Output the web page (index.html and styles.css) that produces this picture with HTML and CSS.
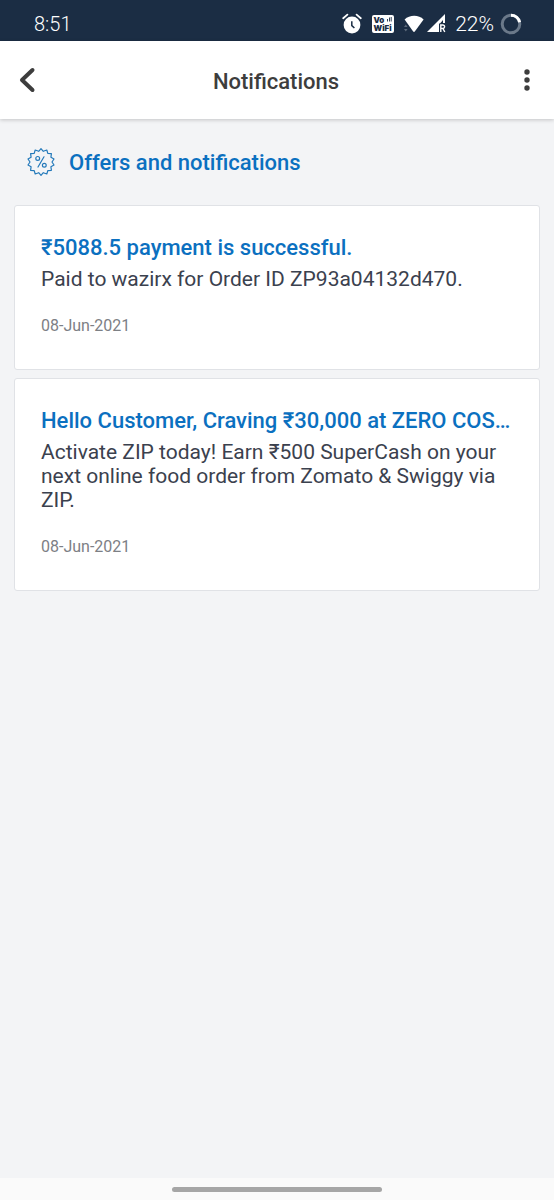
FILE: index.html
```
<!DOCTYPE html>
<html lang="en">
<head>
<meta charset="utf-8">
<meta name="viewport" content="width=device-width, initial-scale=1">
<title>Notifications</title>
<link rel="stylesheet" href="styles.css">
</head>
<body>
<div class="status-bar">
  <span class="clock">8:51</span>
  <div class="status-icons">
    <svg class="alarm" width="20" height="22" viewBox="0 0 20 22" aria-hidden="true">
      <circle cx="10" cy="12" r="8.4" fill="#fff"/>
      <path d="M1.2 5.2 5.4 1.6M18.8 5.2 14.6 1.6" stroke="#fff" stroke-width="1.8" stroke-linecap="round"/>
      <path d="M9.8 8.2v4.4l2.6 2.4" stroke="#1b2d44" stroke-width="1.5" fill="none"/>
    </svg>
    <svg class="vowifi" width="22" height="20" viewBox="0 0 22 20" role="img" aria-label="VoWiFi">
      <rect width="22" height="18" y="1" rx="2" fill="#fff"/>
      <text class="badge-text" x="1.5" y="9">Vo</text>
      <text class="badge-text" x="1.5" y="17">WiFi</text>
      <path d="M15.5 7.5V5M17.5 7.5V3.5M19.2 7.5V3" stroke="#1b2d44" stroke-width="0.9"/>
    </svg>
    <svg class="wifi" width="20" height="18" viewBox="0 0 20 18" aria-hidden="true">
      <path d="M0.6 4.4C5.6-0.6 14.8-0.6 19.6 4.4L10.8 16.6q-.8.9-1.6 0Z" fill="#fff"/>
      <path d="M0 12 1.8 9.6 3.6 12ZM0 14 1.8 16.4 3.6 14Z" fill="#5c6a7b"/>
    </svg>
    <svg class="signal" width="19" height="19" viewBox="0 0 19 19" aria-hidden="true">
      <path d="M0 18 18 0V9H16V6L13 9.5H12V18Z" fill="#fff"/>
      <path d="M13.8 18v-7h2.1a1.7 1.7 0 0 1 0 3.4h-2.1M15.8 14.4 17.8 18" stroke="#fff" stroke-width="1.4" fill="none"/>
    </svg>
    <span class="battery-level">22%</span>
    <svg class="battery" width="22" height="22" viewBox="0 0 22 22" aria-hidden="true">
      <circle cx="11" cy="11" r="8.8" stroke="#6b798a" stroke-width="3" fill="none"/>
      <path d="M11 2.2a8.8 8.8 0 0 1 8.6 7" stroke="#fff" stroke-width="3" fill="none"/>
    </svg>
  </div>
</div>

<header class="app-bar">
  <button class="icon-button" type="button" aria-label="Back">
    <svg width="18" height="26" viewBox="0 0 18 26"><path d="M14.5 3 4 13 14.5 23" fill="none" stroke="#3d3d3d" stroke-width="4" stroke-linecap="round" stroke-linejoin="round"/></svg>
  </button>
  <h1 class="app-title">Notifications</h1>
  <button class="icon-button menu-button" type="button" aria-label="More options">
    <svg width="6" height="24" viewBox="0 0 6 24" fill="#3d3d3d"><circle cx="3" cy="4" r="2.7"/><circle cx="3" cy="12" r="2.7"/><circle cx="3" cy="20" r="2.7"/></svg>
  </button>
</header>

<main class="content">
  <div class="section-heading">
    <svg width="28" height="28" viewBox="0 0 28 28" fill="none" stroke="#2379ba" stroke-width="1.2" stroke-linejoin="round" aria-hidden="true">
      <path d="M14 .7 16.3 3.3 19.8 2 20.8 5.4 24.4 5.7 23.9 9.3 27 11 25 14 27 17 23.9 18.7 24.4 22.3 20.8 22.6 19.8 26 16.3 24.7 14 27.3 11.7 24.7 8.2 26 7.2 22.6 3.6 22.3 4.1 18.7 1 17 3 14 1 11 4.1 9.3 3.6 5.7 7.2 5.4 8.2 2 11.7 3.3Z"/>
      <circle cx="10.7" cy="10.4" r="1.9"/><circle cx="17.3" cy="17.3" r="1.9"/>
      <path d="M17 8.8 11 19" stroke-linecap="round"/>
    </svg>
    <h2 class="section-title">Offers and notifications</h2>
  </div>
  <div class="card-list">
    <article class="card">
      <h3 class="card-title">₹5088.5 payment is successful.</h3>
      <p class="card-text">Paid to wazirx for Order ID ZP93a04132d470.</p>
      <time class="card-date" datetime="2021-06-08">08-Jun-2021</time>
    </article>
    <article class="card">
      <h3 class="card-title">Hello Customer, Craving ₹30,000 at ZERO COS…</h3>
      <p class="card-text">Activate ZIP today! Earn ₹500 SuperCash on your next online food order from Zomato &amp; Swiggy via ZIP.</p>
      <time class="card-date" datetime="2021-06-08">08-Jun-2021</time>
    </article>
  </div>
</main>

<footer class="nav-bar"><div class="home-handle"></div></footer>
</body>
</html>
```
FILE: styles.css
```
* { box-sizing: border-box; }

body {
  margin: 0;
  min-height: 100vh;
  display: flex;
  flex-direction: column;
  background: #f3f4f6;
  color: #3b414e;
  font-family: Roboto, "Noto Sans", sans-serif;
}

h1, h2, h3, p { margin: 0; font-weight: 500; }

svg { display: block; flex: none; }

.status-bar {
  display: flex;
  align-items: center;
  justify-content: space-between;
  height: 41px;
  padding: 6px 32px 0 34px;
  background: #1b2d44;
  color: #fff;
  font-size: 20px;
  font-weight: 300;
}

.status-icons { display: flex; align-items: center; }
.vowifi { margin-left: 10px; }
.wifi { margin-left: 10px; }
.signal { margin-left: 3px; }
.battery-level { margin: 0 6px 0 9px; font-size: 21px; }

.badge-text {
  fill: #1b2d44;
  font-family: Inter, sans-serif;
  font-size: 8px;
  font-weight: 900;
}

.app-bar {
  display: flex;
  align-items: center;
  justify-content: space-between;
  height: 78px;
  padding: 0 20px 0 18px;
  background: #fff;
  box-shadow: 0 1px 4px rgba(0, 0, 0, 0.2);
}

.icon-button {
  display: flex;
  width: 24px;
  padding: 0;
  border: 0;
  background: none;
}

.menu-button { justify-content: flex-end; padding-right: 4px; }

.app-title {
  padding-top: 3px;
  color: #3d3d3d;
  font-size: 22px;
  line-height: 28px;
}

.content { flex: 1; padding: 28px 14px; }

.section-heading {
  display: flex;
  align-items: center;
  gap: 14px;
  padding-left: 13px;
}

.section-title {
  padding-top: 2px;
  color: #0b70c0;
  font-size: 22px;
  line-height: 28px;
}

.card-list { display: grid; gap: 8px; margin-top: 28px; }

.card {
  min-width: 0;
  padding: 27px 26px 32px;
  border: 1px solid #e0e2e6;
  border-radius: 3px;
  background: #fff;
}

.card-title {
  color: #0b70c0;
  font-size: 22px;
  line-height: 30px;
}

.card-text {
  margin-top: 4px;
  font-size: 21px;
  font-weight: 400;
  line-height: 24px;
}

.card-date {
  display: block;
  margin-top: 24px;
  color: #7d8085;
  font-size: 16px;
  line-height: 22px;
}

.nav-bar {
  display: flex;
  align-items: center;
  justify-content: center;
  height: 22px;
  background: #fafafa;
}

.home-handle {
  width: 38%;
  height: 5px;
  border-radius: 3px;
  background: #a6a6a6;
}
```
